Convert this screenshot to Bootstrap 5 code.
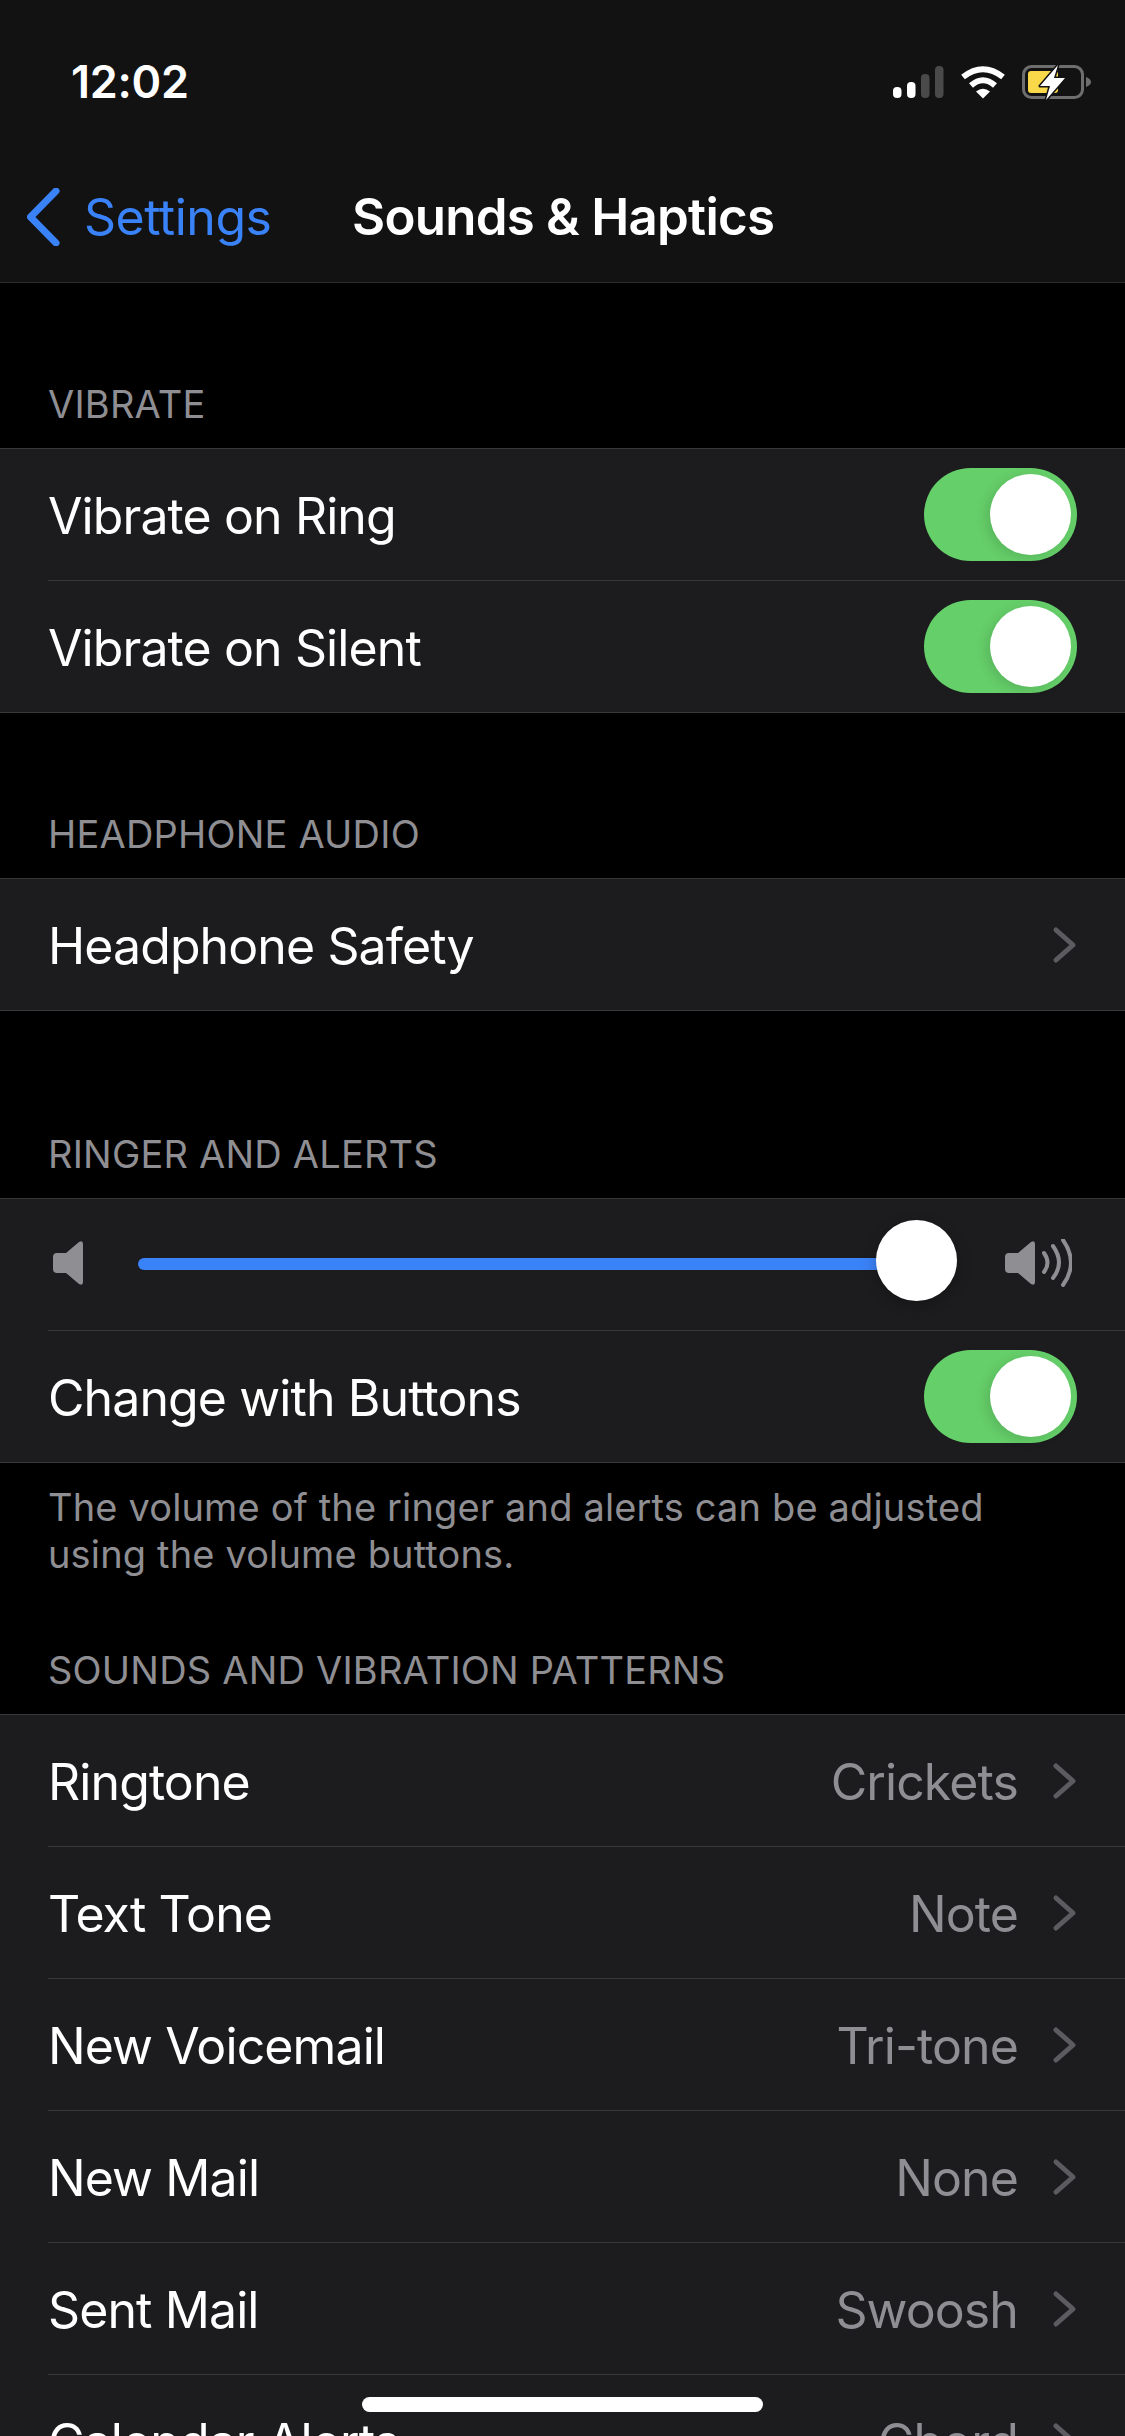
<!DOCTYPE html>
<html lang="en">
<head>
  <meta charset="UTF-8">
  <title>Sounds &amp; Haptics</title>
  <link href="https://cdn.jsdelivr.net/npm/bootstrap@5.3.0/dist/css/bootstrap.min.css" rel="stylesheet">
  <style>
    body {
      background: #000;
      font-family: Inter, "Liberation Sans", sans-serif;
      color: #fff;
    }
    .phone-screen {
      height: 2436px;
      overflow: hidden;
      position: relative;
      background: #000;
    }
    .top-bar {
      height: 283px;
      background: #121212;
      border-bottom: 1px solid #2c2c2e;
    }
    .status-line {
      height: 170px;
      padding: 58px 34px 0 71px;
    }
    .status-time {
      font-size: 45px;
      line-height: 48px;
      font-weight: 600;
      letter-spacing: -0.3px;
    }
    .status-icons {
      margin-top: 6px;
    }
    .nav-line {
      padding-left: 27px;
      height: 46px;
      margin-top: 24px;
    }
    .back-link {
      color: #3a82f7;
      font-size: 50px;
      line-height: 58px;
      letter-spacing: -0.5px;
      text-decoration: none;
      width: 325px;
      gap: 24px;
    }
    .nav-title {
      font-size: 51px;
      line-height: 58px;
      font-weight: 600;
      letter-spacing: -0.75px;
    }
    .section-label {
      color: #8e8e93;
      font-size: 38px;
      line-height: 48px;
      padding: 0 48px 20px 48px;
      letter-spacing: 0.2px;
    }
    .gap-first { margin-top: 97px; }
    .gap-normal { margin-top: 97px; }
    .gap-wide { margin-top: 119px; }
    .gap-after-note { margin-top: 68px; }
    .settings-group {
      border-radius: 0;
      border-top: 1px solid #38383a;
      border-bottom: 1px solid #38383a;
    }
    .settings-group .list-group-item {
      background: #1c1c1e;
      color: #fff;
      border: 0;
      border-radius: 0;
      padding: 0 0 0 48px;
      height: 132px;
    }
    .settings-group .list-group-item:last-child {
      height: 131px;
    }
    .row-inner {
      height: 100%;
      padding-right: 48px;
      border-bottom: 1px solid #38383a;
      font-size: 50px;
      letter-spacing: -0.9px;
    }
    .row-inner > span:not(.ios-toggle) {
      padding-top: 3px;
    }
    .settings-group .list-group-item:last-child .row-inner {
      border-bottom: 0;
    }
    .row-value {
      color: #8e8e93;
      margin-right: 34px;
    }
    .row-chevron {
      width: 25px;
      height: 38px;
      flex: none;
    }
    .ios-toggle {
      width: 153px;
      height: 93px;
      border-radius: 47px;
      background: #65cf69;
      padding: 6px;
      flex: none;
    }
    .ios-toggle-knob {
      width: 81px;
      height: 81px;
      border-radius: 50%;
      background: #fff;
      box-shadow: -4px 3px 12px rgba(0, 0, 0, 0.12);
    }
    .speaker-low {
      width: 30px;
      height: 44px;
      margin: 0 55px 4px 5px;
      flex: none;
    }
    .speaker-high {
      width: 67px;
      height: 48px;
      margin: 0 5px 4px 48px;
      flex: none;
    }
    .volume-track {
      height: 12px;
      border-radius: 6px;
      background: #3a82f7;
      margin-bottom: 2px;
    }
    .volume-knob {
      width: 81px;
      height: 81px;
      border-radius: 50%;
      background: #fff;
      margin: 0 0 8px -24px;
      flex: none;
      box-shadow: 0 4px 14px rgba(0, 0, 0, 0.25);
    }
    .group-note {
      color: #8e8e93;
      font-size: 38px;
      line-height: 47px;
      padding: 21px 48px 0 48px;
      letter-spacing: 0.15px;
    }
    .home-indicator {
      position: absolute;
      left: 362px;
      top: 2397px;
      width: 401px;
      height: 15px;
      border-radius: 8px;
      background: #fff;
    }
  </style>
</head>
<body>
<div class="phone-screen">
  <div class="top-bar">
    <div class="status-line d-flex justify-content-between align-items-start">
      <span class="status-time">12:02</span>
      <svg class="status-icons" width="198" height="36" viewBox="0 0 198 36" aria-hidden="true">
        <rect x="0" y="23" width="8.500" height="11" rx="4" fill="#fff"/>
        <rect x="14" y="18" width="8.500" height="16" rx="4" fill="#fff"/>
        <rect x="28" y="10" width="8.500" height="24" rx="4" fill="#4a4a4a"/>
        <rect x="42" y="2" width="8.500" height="32" rx="4" fill="#4a4a4a"/>
        <g transform="translate(67 2)">
          <path d="M3 11 Q23 -4.500 43 11" fill="none" stroke="#fff" stroke-width="6"/>
          <path d="M11 19.500 Q23 9 35 19.500" fill="none" stroke="#fff" stroke-width="6"/>
          <path d="M16 25.500 Q23 20 30 25.500 L23 32.500 Z" fill="#fff"/>
        </g>
        <g transform="translate(129 1)">
          <rect x="1.500" y="1.500" width="59" height="31" rx="8" fill="none" stroke="#6e6e6e" stroke-width="3"/>
          <rect x="6" y="6" width="30" height="22" rx="3" fill="#f9d849"/>
          <path d="M64 12 Q69 14 69 17 Q69 20 64 22 Z" fill="#6e6e6e"/>
          <path d="M36 0 L18 21 H28 L24 35 L43 13 H32 Z" fill="#fff" stroke="#121212" stroke-width="3" paint-order="stroke" stroke-linejoin="round"/>
        </g>
      </svg>
    </div>
    <div class="nav-line d-flex align-items-center">
      <a class="back-link d-flex align-items-center" href="#">
        <svg width="33" height="58" viewBox="0 0 33 58" aria-hidden="true">
          <path d="M29 3 L3.500 29 L29 55" fill="none" stroke="#3a82f7" stroke-width="7" stroke-linecap="round" stroke-linejoin="round"/>
        </svg>
        <span>Settings</span>
      </a>
      <span class="nav-title">Sounds &amp; Haptics</span>
    </div>
  </div>

  <div class="section-label gap-first">VIBRATE</div>
  <div class="list-group settings-group">
    <div class="list-group-item">
      <div class="row-inner d-flex align-items-center justify-content-between">
        <span>Vibrate on Ring</span>
        <span class="ios-toggle d-flex justify-content-end"><span class="ios-toggle-knob"></span></span>
      </div>
    </div>
    <div class="list-group-item">
      <div class="row-inner d-flex align-items-center justify-content-between">
        <span>Vibrate on Silent</span>
        <span class="ios-toggle d-flex justify-content-end"><span class="ios-toggle-knob"></span></span>
      </div>
    </div>
  </div>

  <div class="section-label gap-normal">HEADPHONE AUDIO</div>
  <div class="list-group settings-group">
    <div class="list-group-item">
      <div class="row-inner d-flex align-items-center">
        <span class="me-auto">Headphone Safety</span>
        <svg class="row-chevron" viewBox="0 0 25 38" aria-hidden="true"><path d="M4 4 L21 19 L4 34" fill="none" stroke="#5c5c60" stroke-width="5" stroke-linecap="round" stroke-linejoin="round"/></svg>
      </div>
    </div>
  </div>

  <div class="section-label gap-wide">RINGER AND ALERTS</div>
  <div class="list-group settings-group">
    <div class="list-group-item">
      <div class="row-inner d-flex align-items-center">
        <svg class="speaker-low" viewBox="0 0 30 44" aria-hidden="true">
          <path d="M4 12 H13 L26 1 Q30 -1 30 3 V41 Q30 45 26 43 L13 32 H4 Q0 32 0 28 V16 Q0 12 4 12 Z" fill="#8e8e93"/>
        </svg>
        <div class="volume-track flex-grow-1"></div>
        <div class="volume-knob"></div>
        <svg class="speaker-high" viewBox="0 0 67 48" aria-hidden="true">
          <path d="M4 14 H13 L26 3 Q30 1 30 5 V43 Q30 47 26 45 L13 34 H4 Q0 34 0 30 V18 Q0 14 4 14 Z" fill="#8e8e93"/>
          <path d="M39 14 Q46 24 39 33" fill="none" stroke="#8e8e93" stroke-width="4" stroke-linecap="round"/>
          <path d="M48 7 Q60 24 48 39" fill="none" stroke="#8e8e93" stroke-width="4" stroke-linecap="round"/>
          <path d="M58 1 Q74 24 58 46" fill="none" stroke="#8e8e93" stroke-width="4" stroke-linecap="round"/>
        </svg>
      </div>
    </div>
    <div class="list-group-item">
      <div class="row-inner d-flex align-items-center justify-content-between">
        <span>Change with Buttons</span>
        <span class="ios-toggle d-flex justify-content-end"><span class="ios-toggle-knob"></span></span>
      </div>
    </div>
  </div>
  <div class="group-note">The volume of the ringer and alerts can be adjusted<br>using the volume buttons.</div>

  <div class="section-label gap-after-note">SOUNDS AND VIBRATION PATTERNS</div>
  <div class="list-group settings-group">
    <div class="list-group-item">
      <div class="row-inner d-flex align-items-center">
        <span class="me-auto">Ringtone</span>
        <span class="row-value">Crickets</span>
        <svg class="row-chevron" viewBox="0 0 25 38" aria-hidden="true"><path d="M4 4 L21 19 L4 34" fill="none" stroke="#5c5c60" stroke-width="5" stroke-linecap="round" stroke-linejoin="round"/></svg>
      </div>
    </div>
    <div class="list-group-item">
      <div class="row-inner d-flex align-items-center">
        <span class="me-auto">Text Tone</span>
        <span class="row-value">Note</span>
        <svg class="row-chevron" viewBox="0 0 25 38" aria-hidden="true"><path d="M4 4 L21 19 L4 34" fill="none" stroke="#5c5c60" stroke-width="5" stroke-linecap="round" stroke-linejoin="round"/></svg>
      </div>
    </div>
    <div class="list-group-item">
      <div class="row-inner d-flex align-items-center">
        <span class="me-auto">New Voicemail</span>
        <span class="row-value">Tri-tone</span>
        <svg class="row-chevron" viewBox="0 0 25 38" aria-hidden="true"><path d="M4 4 L21 19 L4 34" fill="none" stroke="#5c5c60" stroke-width="5" stroke-linecap="round" stroke-linejoin="round"/></svg>
      </div>
    </div>
    <div class="list-group-item">
      <div class="row-inner d-flex align-items-center">
        <span class="me-auto">New Mail</span>
        <span class="row-value">None</span>
        <svg class="row-chevron" viewBox="0 0 25 38" aria-hidden="true"><path d="M4 4 L21 19 L4 34" fill="none" stroke="#5c5c60" stroke-width="5" stroke-linecap="round" stroke-linejoin="round"/></svg>
      </div>
    </div>
    <div class="list-group-item">
      <div class="row-inner d-flex align-items-center">
        <span class="me-auto">Sent Mail</span>
        <span class="row-value">Swoosh</span>
        <svg class="row-chevron" viewBox="0 0 25 38" aria-hidden="true"><path d="M4 4 L21 19 L4 34" fill="none" stroke="#5c5c60" stroke-width="5" stroke-linecap="round" stroke-linejoin="round"/></svg>
      </div>
    </div>
    <div class="list-group-item">
      <div class="row-inner d-flex align-items-center">
        <span class="me-auto">Calendar Alerts</span>
        <span class="row-value">Chord</span>
        <svg class="row-chevron" viewBox="0 0 25 38" aria-hidden="true"><path d="M4 4 L21 19 L4 34" fill="none" stroke="#5c5c60" stroke-width="5" stroke-linecap="round" stroke-linejoin="round"/></svg>
      </div>
    </div>
  </div>
  <div class="home-indicator"></div>
</div>
<script src="https://cdn.jsdelivr.net/npm/bootstrap@5.3.0/dist/js/bootstrap.bundle.min.js"></script>
</body>
</html>
